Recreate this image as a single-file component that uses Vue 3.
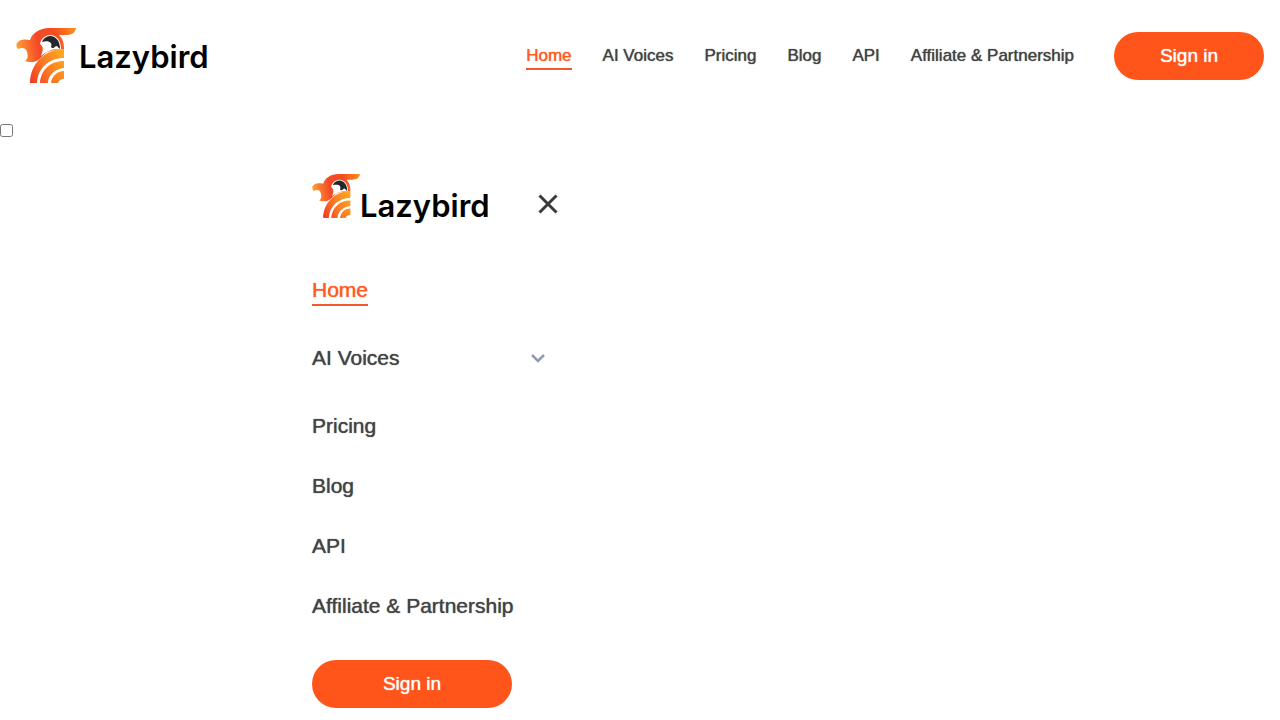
<script setup>
import { ref } from 'vue'

const menuToggled = ref(false)
const links = ['Home', 'AI Voices', 'Pricing', 'Blog', 'API', 'Affiliate & Partnership']
</script>

<template>
  <svg class="defs" aria-hidden="true">
    <defs>
      <linearGradient id="head" gradientUnits="userSpaceOnUse" x1="0" y1="16" x2="60" y2="6">
        <stop offset="0" stop-color="#ffa238" />
        <stop offset="0.24" stop-color="#f9642a" />
        <stop offset="0.36" stop-color="#f24a28" />
        <stop offset="0.65" stop-color="#f54c22" />
        <stop offset="1" stop-color="#ff8c1e" />
      </linearGradient>
      <linearGradient id="band" gradientUnits="userSpaceOnUse" x1="14" y1="50" x2="48" y2="30">
        <stop offset="0" stop-color="#f23d26" />
        <stop offset="0.5" stop-color="#fb7a22" />
        <stop offset="1" stop-color="#ffa51f" />
      </linearGradient>
      <symbol id="bird" viewBox="0 0 60 56">
        <path fill="url(#head)" d="M60 0C59 5 56 7 50 7L43 7C47 11 48 15 48 21C42 21 36 22 31 24C26 27 24 33 17 34C14 34 11 34 9 33C12 31 12 28 11 24C10 20 7 19 2 21C0 19 0 16 1 15C4 11 8 11 14 12C16 5 24 0 33 0Z" />
        <path fill="#fff" d="M24 16C25 10 30 7 35 7C42 8 45 14 45 21C41 21 37 21 33 23C30 24 27 26 25 28C26 24 29 20 24 16Z" />
        <path fill="#23282c" d="M26 14C28 9 32 8 35 8C41 9 44 14 44 21C42 20 42 18 40 18C38 20 36 21 35 19C37 15 33 12 26 14Z" />
        <g fill="url(#band)">
          <path d="M14 55C14 37 28 21 48 21V30C33 30 22 40 21 55Z" />
          <path d="M24 55C25 42 34 33 48 33V40C39 41 32 47 32 55Z" />
          <path d="M35 55C36 48 41 43 48 43V51C45 51 43 52 42 55Z" />
        </g>
      </symbol>
    </defs>
  </svg>

  <header class="bar">
    <a class="logo" href="#" aria-label="Lazybird">
      <svg class="mark" aria-hidden="true"><use href="#bird" /></svg>
      <span class="word">Lazybird</span>
    </a>
    <nav class="nav">
      <a v-for="(l, i) in links" :key="l" href="#" :class="{ active: i === 0 }">{{ l }}</a>
    </nav>
    <button class="sign" type="button">Sign in</button>
  </header>

  <input v-model="menuToggled" class="toggle" type="checkbox" aria-label="Toggle menu" />

  <aside class="drawer">
    <div class="top">
      <a class="logo small" href="#" aria-label="Lazybird">
        <svg class="mark" aria-hidden="true"><use href="#bird" /></svg>
        <span class="word">Lazybird</span>
      </a>
      <button class="icon" type="button" aria-label="Close menu">
        <svg width="20" height="20" viewBox="0 0 20 20" fill="none" stroke="#3a3a3a" stroke-width="3"><path d="M1.500 1.500 18.500 18.500M18.500 1.500 1.500 18.500" /></svg>
      </button>
    </div>
    <nav class="menu">
      <div v-for="(l, i) in links" :key="l" class="row" :class="{ tall: i === 1 }">
        <a href="#" :class="{ active: i === 0 }">{{ l }}</a>
        <button v-if="i === 1" class="icon" type="button" aria-label="Show AI voices">
          <svg width="14" height="10" viewBox="0 0 14 10" fill="none" stroke="#8e9bb3" stroke-width="2.500"><path d="M1 2l6 6 6-6" /></svg>
        </button>
      </div>
    </nav>
    <button class="sign wide" type="button">Sign in</button>
  </aside>
</template>

<style>
body {
  background: #fff;
  font-family: "Liberation Sans", Arial, sans-serif;
  color: #444;
}
</style>

<style scoped>
.defs { position: absolute; width: 0; height: 0; }
a { color: inherit; text-decoration: none; }
button { font: inherit; border: 0; padding: 0; cursor: pointer; }
.bar { display: flex; align-items: center; height: 112px; padding: 0 16px; }
.logo { display: flex; align-items: center; gap: 3px; color: #000; }
.mark { width: 60px; height: 56px; }
.word { padding-top: 2px; font: 600 31px/40px Inter, sans-serif; }
.nav { display: flex; gap: 31px; margin-left: auto; margin-right: 40px; font-size: 17px; line-height: 24px; }
.nav a { border-bottom: 2px solid transparent; padding-top: 2px; }
.nav a, .menu a, .sign { text-shadow: 0 0 1px currentColor; }
.nav a.active, .menu a.active { color: #ff5a24; border-color: #f0592a; }
.sign { width: 150px; height: 48px; border-radius: 24px; background: #ff551a; color: #fff; font-size: 19px; }
.toggle { display: block; width: 13px; height: 13px; margin: 12px 0 0; }
.drawer { width: 250px; margin-left: 312px; padding-top: 33px; }
.top { display: flex; align-items: center; justify-content: space-between; height: 68px; padding-right: 4px; }
.small { align-items: flex-start; gap: 0; height: 60px; }
.small .mark { width: 48px; height: 45px; }
.small .word { padding-top: 12px; }
.icon { display: flex; background: none; }
.menu { padding-top: 22px; font-size: 21px; line-height: 28px; }
.row { display: flex; align-items: center; justify-content: space-between; height: 60px; padding-right: 17px; white-space: nowrap; }
.row.tall { height: 76px; }
.menu a { padding-top: 2px; border-bottom: 2px solid transparent; }
.wide { width: 200px; margin-top: 24px; }
</style>
